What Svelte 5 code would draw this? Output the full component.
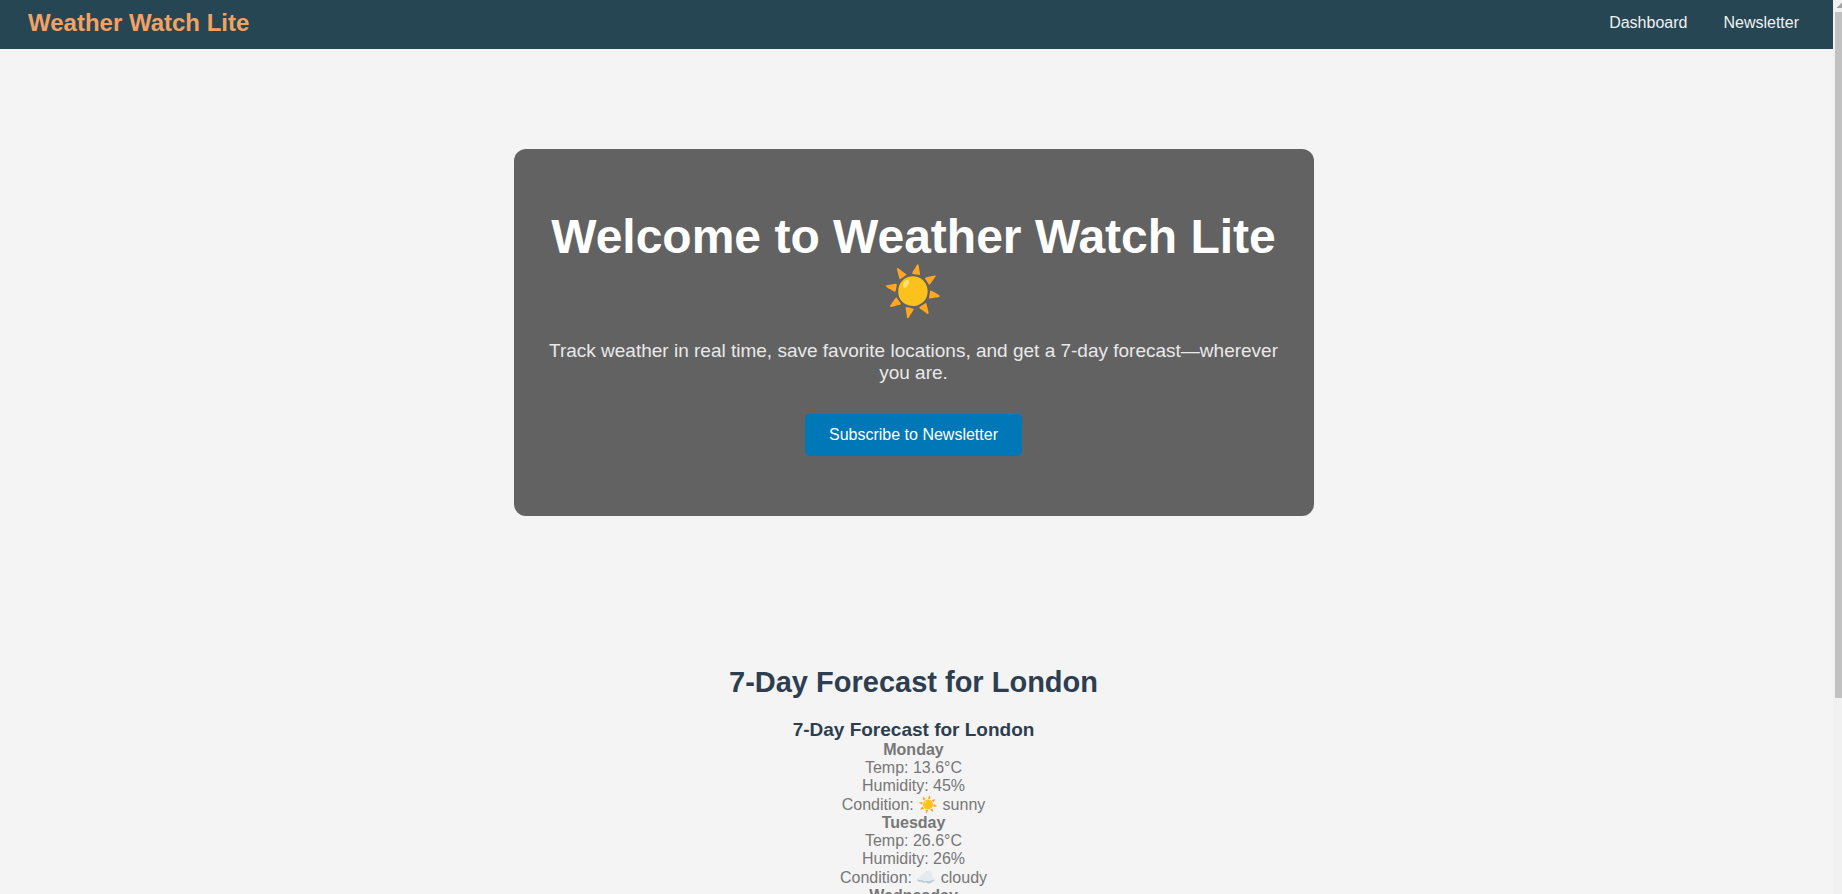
<script>
  const links = ['Dashboard', 'Newsletter'];
  const city = 'London';
  const days = [
    { name: 'Monday', temp: 13.6, humidity: 45, icon: '☀️', condition: 'sunny' },
    { name: 'Tuesday', temp: 26.6, humidity: 26, icon: '☁️', condition: 'cloudy' },
    { name: 'Wednesday' }
  ];
</script>

<div class="shell">
  <header>
    <div class="brand">Weather Watch Lite</div>
    <nav>
      {#each links as link}
        <a href="#{link.toLowerCase()}">{link}</a>
      {/each}
    </nav>
  </header>

  <main>
    <section class="hero">
      <h1>Welcome to Weather Watch Lite ☀️</h1>
      <p>Track weather in real time, save favorite locations, and get a 7-day forecast—wherever you are.</p>
      <button type="button">Subscribe to Newsletter</button>
    </section>

    <section class="forecast">
      <h2>7-Day Forecast for {city}</h2>
      <h3>7-Day Forecast for {city}</h3>
      {#each days as day}
        <article>
          <h4>{day.name}</h4>
          {#if day.condition}
            <p>Temp: {day.temp}°C</p>
            <p>Humidity: {day.humidity}%</p>
            <p class="condition">Condition: {day.icon} {day.condition}</p>
          {/if}
        </article>
      {/each}
    </section>
  </main>

  <div class="scrollbar" aria-hidden="true">
    <svg width="5" height="5" viewBox="0 0 5 5" shape-rendering="crispEdges">
      <path d="M0 5V4H1V3H2V2H3V1H4V0H5V5Z" fill="#a3a3a3" />
    </svg>
    <div class="thumb"></div>
  </div>
</div>

<style>
  :global(body) {
    margin: 0;
    background: #f4f4f4;
  }

  .shell {
    box-sizing: border-box;
    height: 100vh;
    overflow: hidden;
    padding-right: 9px;
    background: #f4f4f4;
    color: #777;
    font-family: 'Liberation Sans', Arial, 'Noto Color Emoji', sans-serif;
    font-size: 16px;
  }

  h1, h2, h3, h4, p {
    margin: 0;
  }

  header {
    display: flex;
    justify-content: space-between;
    align-items: center;
    padding: 9px 34px 13px 28px;
    background: #264653;
  }

  .brand {
    color: #f4a261;
    font-size: 24px;
    font-weight: bold;
    line-height: 27px;
  }

  nav {
    display: flex;
    gap: 36px;
  }

  nav a {
    color: #f1f1f1;
    text-decoration: none;
  }

  main {
    display: flex;
    flex-direction: column;
    align-items: center;
    gap: 150px;
    padding: 100px 6px 0 0;
    text-align: center;
  }

  .hero {
    box-sizing: border-box;
    width: 100%;
    max-width: 800px;
    padding: 60px 32px;
    border-radius: 12px;
    background: #626262;
  }

  .hero h1 {
    margin-bottom: 21px;
    color: #fff;
    font-size: 48px;
    line-height: 55px;
  }

  .hero p {
    margin-bottom: 30px;
    color: #e9e9e9;
    font-size: 19px;
    line-height: 22px;
  }

  button {
    padding: 12px 24px;
    border: 0;
    border-radius: 5px;
    background: #0077b6;
    color: #fff;
    font: inherit;
    line-height: 18px;
  }

  .forecast h2 {
    margin-bottom: 20px;
    color: #2c3e50;
    font-size: 29px;
    line-height: 33px;
  }

  .forecast h3 {
    color: #2c3e50;
    font-size: 19px;
    line-height: 22px;
  }

  h4 {
    font-size: 16px;
    line-height: 18px;
  }

  .forecast p {
    line-height: 18px;
  }

  .forecast .condition {
    line-height: 19px;
  }

  .scrollbar {
    position: fixed;
    top: 0;
    right: 0;
    bottom: 0;
    width: 9px;
    background: #f1f1f1;
  }

  .scrollbar svg {
    display: block;
    margin: 3px 0 4px auto;
  }

  .thumb {
    height: calc(77% - 2px);
    margin-left: 2px;
    background: #c1c1c1;
  }
</style>
